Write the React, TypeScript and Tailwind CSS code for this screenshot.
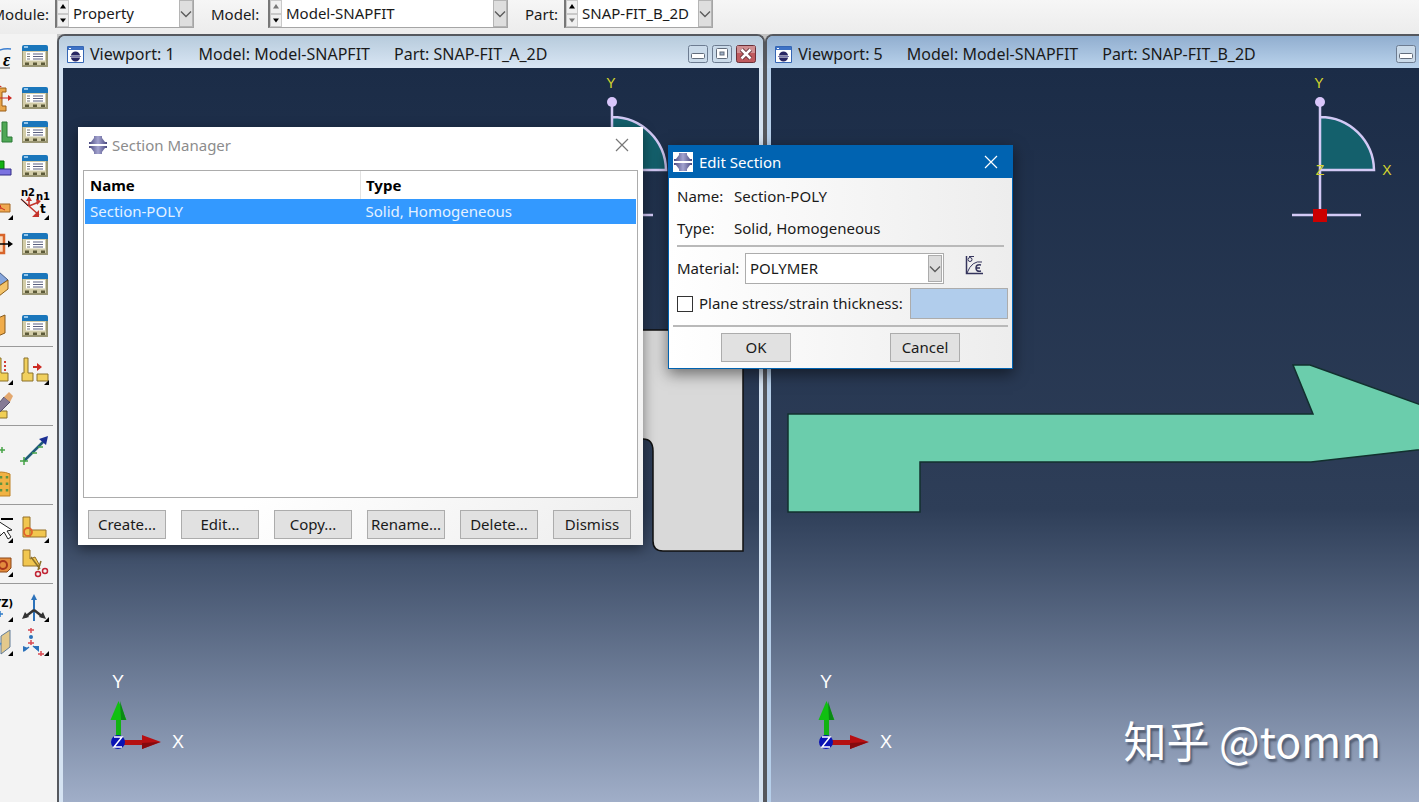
import React, { useState } from "react";

const UI_FONT = "font-['Noto_Sans','Open_Sans',sans-serif]";

function Chevron() {
  return (
    <svg viewBox="0 0 12 8" className="h-2 w-3" fill="none" stroke="#5c5c5c" strokeWidth="1.4">
      <path d="M1 1.500 6 6.500 11 1.500" />
    </svg>
  );
}

interface ComboProps {
  id: string;
  label: string;
  value: string;
  labelClass: string;
  boxClass: string;
  upOff?: boolean;
  downOff?: boolean;
}

function ContextCombo({ id, label, value, labelClass, boxClass, upOff, downOff }: ComboProps) {
  return (
    <div className="flex shrink-0 items-center gap-1.5">
      <label htmlFor={id} className={`flex whitespace-nowrap ${labelClass}`}>
        {label}
      </label>
      <div className={`flex h-7 border border-t-0 border-[#a5a5a5] border-l-2 border-l-[#777] bg-white ${boxClass}`}>
        <div className="flex w-3 shrink-0 flex-col">
          {[upOff, downOff].map((off, i) => (
            <button
              key={i}
              aria-label={i === 0 ? `Previous ${id}` : `Next ${id}`}
              className="flex flex-1 items-center justify-center border border-[#c9c9c9] bg-[#f0f0f0]"
            >
              <svg viewBox="0 0 8 5" className="h-[5px] w-2" fill={off ? "#777" : "#000"}>
                <path d={i === 0 ? "M4 0 7 4.500H1Z" : "M4 4.500 7 .5H1Z"} />
              </svg>
            </button>
          ))}
        </div>
        <div className="relative flex-1">
          <select id={id} className="h-full w-full appearance-none bg-transparent pl-1 outline-none">
            <option>{value}</option>
          </select>
          <span className="pointer-events-none absolute inset-y-0 right-0 flex w-3.5 items-center justify-center border border-[#b5b5b5] bg-[#dedede]">
            <Chevron />
          </span>
        </div>
      </div>
    </div>
  );
}

/* ---------- toolbox icons, all on a 28x28 grid ---------- */

function Flyout() {
  return <path d="M28 23v5h-5z" fill="#000" />;
}

function ManagerIcon() {
  return (
    <>
      <path d="M1 5h26v20H1z" fill="#9a9674" />
      <path d="M2 9h23v14H2z" fill="#d3cda9" />
      <path d="M1 5q0-2 2-2h22q2 0 2 2v4H1z" fill="#1a76bb" />
      <path d="M3 5h4" stroke="#bfe2fa" strokeWidth="1.500" />
      <path d="M5 10h19v8.500H5z" fill="#fff" />
      <path d="M6 12h3M6 14.500h3M6 17h3" stroke="#777" />
      <path d="M12 12h10M12 14.500h10M12 17h10" stroke="#5b6080" strokeWidth="1.200" />
      <path d="M4 20.500h4V23H4zM12 20.500h4V23h-4zM20 20.500h4V23h-4z" fill="#5c5a38" />
    </>
  );
}

const LEFT_ICONS: Record<string, React.ReactNode> = {
  material: (
    <>
      <path d="M0 24Q8 5 26 7" fill="none" stroke="#3c7fd0" strokeWidth="1.500" />
      <path d="M0 26h25" stroke="#555" />
      <text x="18" y="24" fontSize="18" fontWeight="bold" fontStyle="italic" fontFamily="Liberation Serif">ε</text>
      <path d="M12 1l3 3" stroke="#c33" />
    </>
  ),
  section: (
    <>
      <path d="M4 4h17v4h-4v14h4v5H4v-5h5V8H4z" fill="#e8a64a" stroke="#9a5c16" />
      <path d="M13 14h12M13 1v5" stroke="#cc2a22" />
      <path d="M23 11l4 3-4 3zM13 0l4 3h-4z" fill="#cc2a22" />
    </>
  ),
  assign: (
    <>
      <path d="M17 4h5v15h5v5H17z" fill="#4fa755" stroke="#2b7a36" />
      <path d="M8 13h7" stroke="#cc2a22" />
      <path d="M13 10l3 3-3 3z" fill="#cc2a22" />
    </>
  ),
  layup: (
    <>
      <path d="M5 9h14v8H5z" fill="#12b012" stroke="#067006" />
      <path d="M5 17h21v6H5z" fill="#7b72e0" stroke="#332d86" />
    </>
  ),
  beam: (
    <>
      <path d="M2 12h23v8H2z" fill="#f0a850" stroke="#a36722" />
      <path d="M15 13l1 3 4 2M16 16l-4 2" stroke="#cc2a22" fill="none" />
      <Flyout />
    </>
  ),
  stringer: (
    <>
      <path d="M8 5h11v18H8z" fill="#fbd8b8" stroke="#d8642a" strokeWidth="2.500" />
      <path d="M8 14h16" stroke="#000" strokeWidth="1.500" />
      <path d="M23 10.500l5 3.500-5 3.500z" />
    </>
  ),
  skin: (
    <>
      <path d="M4 10l10-8 9 8-9 6z" fill="#86a6dc" stroke="#405a88" />
      <path d="M14 16l9-6v9l-9 7z" fill="#f4c46a" stroke="#8a5d1c" />
    </>
  ),
  shell: <path d="M6 9l14-6v18L6 27z" fill="#f0ac4b" stroke="#875a1d" />,
  mirror: (
    <>
      <path d="M7 1h9v15h7v8H7z" fill="#f1cf55" stroke="#8a702a" />
      <path d="M20 4v12" stroke="#d33c35" strokeWidth="2" strokeDasharray="2 2" />
      <Flyout />
    </>
  ),
  erase: (
    <>
      <path d="M4 20h18v7H4z" fill="#f1cf55" stroke="#8a702a" />
      <path d="M10 17L19 6l6 5-11 11z" fill="#857a95" stroke="#56506a" />
      <path d="M19 6l5-5 4 4-3 6z" fill="#e3a86f" />
    </>
  ),
  point: <path d="M14 14h6M17 11v6" stroke="#47a447" strokeWidth="1.500" />,
  pattern: (
    <>
      <path d="M8 4q8-4 17 0v22H8z" fill="#f1b243" stroke="#bd8125" />
      <path d="M16 6v18M22 6v18" stroke="#5f9440" strokeWidth="2.500" strokeDasharray="2.500 4" />
    </>
  ),
  pick: (
    <>
      <path d="M16 4h12" stroke="#000" strokeWidth="2" />
      <path d="M13 6l2 15 4-4 4 7 3-2-4-6 5-1z" fill="#fff" stroke="#222" />
      <Flyout />
    </>
  ),
  cell: (
    <>
      <path d="M10 12l4-3h12v10l-4 4H10z" fill="#e38b3d" stroke="#8b4616" />
      <circle cx="18" cy="16" r="4" fill="none" stroke="#a8341b" strokeWidth="2" />
      <Flyout />
    </>
  ),
  xyz: (
    <>
      <text x="28" y="13" textAnchor="end" fontSize="10" fontWeight="bold" fontFamily="DejaVu Sans">YZ)</text>
      <path d="M12 20h6M15 17v6" stroke="#2e7bc8" strokeWidth="1.500" />
      <Flyout />
    </>
  ),
  datum: (
    <>
      <path d="M16 8l9-6v17l-9 7z" fill="#e3c98c" stroke="#627d98" />
      <path d="M12 20l4-5" stroke="#4a8ecc" strokeWidth="1.500" />
      <Flyout />
    </>
  ),
};

const RIGHT_ICONS: Record<string, React.ReactNode> = {
  manager: <ManagerIcon />,
  normals: (
    <>
      <g fontSize="10" fontWeight="bold" fontFamily="DejaVu Sans">
        <text x="0" y="4">n2</text>
        <text x="15" y="8">n1</text>
        <text x="19" y="21" fontSize="12">t</text>
      </g>
      <path d="M0 7l18 16M8 14V8M8 14l10-4" stroke="#c4342c" strokeWidth="1.500" fill="none" />
      <path d="M0 7l7 7" stroke="#333" />
      <path d="M18 18v7h-7zM5 9l3-5 3 5zM15 7l5 2-4 4z" fill="#c4342c" />
      <Flyout />
    </>
  ),
  offset: (
    <>
      <path d="M3 1h4v15h5v8H1v-8h2zM16 17h11v7H16z" fill="#f1d05e" stroke="#8a702a" />
      <path d="M12 10h5" stroke="#cc2a22" strokeWidth="2" />
      <path d="M16 6l5 4-5 4z" fill="#cc2a22" />
      <Flyout />
    </>
  ),
  axis: (
    <>
      <path d="M3 25L25 3" stroke="#1f5b78" strokeWidth="2.500" />
      <path d="M27 0l-2 9-7-6z" fill="#1b2f93" />
      <path d="M-1 25h8M3 21v8M11 17h5M17 11h5" stroke="#47a447" strokeWidth="1.500" />
    </>
  ),
  partition: (
    <>
      <path d="M2 2h7v13h16v7H2z" fill="#f1c64f" stroke="#94702a" />
      <path d="M9 15v7" stroke="#94702a" />
      <circle cx="7" cy="17" r="4" fill="none" stroke="#e0642b" strokeWidth="1.800" />
      <Flyout />
    </>
  ),
  trim: (
    <>
      <path d="M2 1h7v9l5-2 5 9H2z" fill="#f1c64f" stroke="#94702a" />
      <path d="M10 8l9 12M20 12l-3 9" stroke="#8a702a" strokeWidth="1.500" />
      <circle cx="17" cy="25" r="2.500" fill="none" stroke="#c12434" strokeWidth="1.500" />
      <circle cx="24" cy="22" r="2.500" fill="none" stroke="#c12434" strokeWidth="1.500" />
    </>
  ),
  csys: (
    <>
      <path d="M13 2v25" stroke="#2c72ba" strokeWidth="2" />
      <path d="M13 0l3 6h-6z" fill="#2c72ba" />
      <path d="M13 16L4 23M13 16l9 7" stroke="#333" strokeWidth="2.500" />
      <path d="M1 25l3-7 4 5zM25 25l-3-7-4 5z" fill="#333" />
      <Flyout />
    </>
  ),
  points: (
    <>
      <path d="M7 2h6M10 0v5M7 15h6M10 12v5M17 26h6M20 23v5" stroke="#d94a52" strokeWidth="1.500" />
      <circle cx="10" cy="9" r="2" fill="#2c72ba" />
      <path d="M2 24v-6l5 2zM12 18l6 6v-6z" fill="#2c72ba" />
      <path d="M3 23l5-4M12 18l5 4" stroke="#2c72ba" strokeWidth="1.500" />
      <Flyout />
    </>
  ),
};

interface ToolRow {
  left: string;
  right?: string;
  height: string;
}

const TOOL_GROUPS: ToolRow[][] = [
  [
    { left: "material", right: "manager", height: "h-11" },
    { left: "section", right: "manager", height: "h-10" },
    { left: "assign", right: "manager", height: "h-7" },
    { left: "layup", right: "manager", height: "h-10" },
    { left: "beam", right: "normals", height: "h-10" },
    { left: "stringer", right: "manager", height: "h-9" },
    { left: "skin", right: "manager", height: "h-11" },
    { left: "shell", right: "manager", height: "h-10" },
  ],
  [
    { left: "mirror", right: "offset", height: "h-12" },
    { left: "erase", height: "h-5" },
  ],
  [
    { left: "point", right: "axis", height: "h-12" },
    { left: "pattern", height: "h-5" },
  ],
  [
    { left: "pick", right: "partition", height: "h-12" },
    { left: "cell", right: "trim", height: "h-5" },
  ],
  [
    { left: "xyz", right: "csys", height: "h-12" },
    { left: "datum", right: "points", height: "h-5" },
  ],
];

function Toolbox() {
  return (
    <aside className="flex w-[57px] shrink-0 flex-col overflow-hidden bg-[#f3f3f3]">
      {TOOL_GROUPS.map((rows, g) => (
        <div key={g} className={`mr-1 flex flex-col pr-1 ${g > 0 ? "border-t border-[#9a9a9a] pb-2.5" : ""}`}>
          {rows.map((row) => (
            <div key={row.left} className={`flex items-center justify-end gap-2 ${row.height}`}>
              <button aria-label={row.left} className="size-7 shrink-0">
                <svg viewBox="0 0 28 28" className="size-7 overflow-visible">{LEFT_ICONS[row.left]}</svg>
              </button>
              {row.right ? (
                <button aria-label={row.right} className="size-7 shrink-0">
                  <svg viewBox="0 0 28 28" className="size-7 overflow-visible">{RIGHT_ICONS[row.right]}</svg>
                </button>
              ) : (
                <span className="size-7 shrink-0" />
              )}
            </div>
          ))}
        </div>
      ))}
    </aside>
  );
}

/* ---------- viewports ---------- */

function SketchGlyph() {
  return (
    <g>
      <path d="M549 48A54 54 0 0 1 603 102H549Z" fill="#14606c" />
      <path d="M549 34V147M549 49A54 54 0 0 1 603 102H549M521 147H590" fill="none" stroke="#d3c9f5" strokeWidth="2.500" />
      <circle cx="549" cy="34" r="5" fill="#d9c6fb" />
      <rect x="542" y="141" width="14" height="13" fill="#cc0000" />
      <g fill="#d6d62e" fontSize="14" textAnchor="middle" fontFamily="Liberation Sans">
        <text x="548" y="20">Y</text>
        <text x="616" y="107">X</text>
        <text x="549" y="107">Z</text>
      </g>
    </g>
  );
}

function Triad() {
  return (
    <svg viewBox="0 -10 90 100" className="absolute bottom-[38px] left-10 h-[100px] w-[90px]">
      <path d="M13 66V42h5v24z" fill="#12b312" />
      <path d="M15.500 27l8 19h-16z" fill="#10c010" />
      <path d="M17 27l6 19h-5z" fill="#0a8a14" />
      <path d="M18 66h22v5H18z" fill="#b51212" />
      <path d="M39 61l19 7-19 7z" fill="#b80f12" />
      <path d="M39 69l18-1-18 7z" fill="#850a0e" />
      <circle cx="15" cy="68" r="7" fill="#0a12b4" />
      <path d="M11 63h8l-8 10h8" fill="none" stroke="#fff" strokeWidth="1.500" />
      <g fill="#fff" fontSize="18" textAnchor="middle" fontFamily="Liberation Sans">
        <text x="15" y="14">Y</text>
        <text x="75" y="74">X</text>
      </g>
    </svg>
  );
}

interface ViewportProps {
  id: number;
  part: string;
  active?: boolean;
  children: React.ReactNode;
}

function Viewport({ id, part, active, children }: ViewportProps) {
  return (
    <section
      className={`flex w-[52%] shrink-0 flex-col rounded-t-lg border-t-2 border-r-2 border-l-2 border-[#55585e] ${
        active ? "bg-[#b6cfea]" : "bg-[#d5e3f2]"
      }`}
    >
      <header
        className={`flex h-8 shrink-0 items-center gap-6 rounded-t-md bg-linear-to-b pt-1 pr-[7px] pl-2 text-base whitespace-nowrap ${
          active ? "from-[#91aecf] to-[#bad3ec]" : "from-[#b7cbdc] to-[#d9e6f4]"
        }`}
      >
        <span className="flex items-center gap-1.5">
          <svg viewBox="0 0 17 17" className="size-[17px]">
            <path d="M.5.500h16v16H.5z" fill="#fff" stroke="#3566b4" />
            <path d="M1 1h15v3H1z" fill="#3e72c5" />
            <path d="M2 2.500h2" stroke="#fff" />
            <path d="M4 9.500a4.500 4 0 0 1 9 0zM4 11.500a4.500 4 0 0 0 9 0z" fill="#292663" />
            <path d="M3 10.500h11" stroke="#7675a8" />
          </svg>
          <span>Viewport: {id}</span>
        </span>
        <span>Model: Model-SNAPFIT</span>
        <span>Part: {part}</span>
        <span className="ml-auto flex gap-1">
          <button aria-label="Minimize" className="h-[18px] w-5">
            <svg viewBox="0 0 20 18" className="h-[18px] w-5">
              <rect x=".5" y=".5" width="19" height="17" rx="2" fill="#cbdbea" stroke="#6d7c91" />
              <rect x="3.500" y="8.500" width="13" height="5" rx="1" fill="#fff" stroke="#626d7c" />
            </svg>
          </button>
          <button aria-label="Maximize" className="h-[18px] w-5">
            <svg viewBox="0 0 20 18" className="h-[18px] w-5">
              <rect x=".5" y=".5" width="19" height="17" rx="2" fill="#cbdbea" stroke="#6d7c91" />
              <rect x="4.500" y="3.500" width="11" height="10" rx="1" fill="#fff" stroke="#626d7c" />
              <rect x="8" y="7" width="4" height="3" fill="#9fb0c5" stroke="#626d7c" />
            </svg>
          </button>
          <button aria-label="Close" className="h-[18px] w-5">
            <svg viewBox="0 0 20 18" className="h-[18px] w-5">
              <rect x=".5" y=".5" width="19" height="17" rx="2" fill="#bf5a5e" stroke="#6a3038" />
              <path d="M1 1h18v7H1z" fill="#d08f92" />
              <path d="M5.500 4.500l9 9M14.500 4.500l-9 9" stroke="#663339" strokeWidth="4.500" />
              <path d="M5.500 4.500l9 9M14.500 4.500l-9 9" stroke="#fff" strokeWidth="2.500" />
            </svg>
          </button>
        </span>
      </header>
      <div className="relative mx-1 min-h-0 flex-1 overflow-hidden bg-linear-to-b from-[#1b2c47] via-[#2e3e58] via-60% to-[#a0aec8]">
        <svg className="absolute top-0 left-0 h-full w-full">
          <SketchGlyph />
          {children}
        </svg>
        <Triad />
      </div>
    </section>
  );
}

/* ---------- dialogs ---------- */

function AppMark({ boxed }: { boxed?: boolean }) {
  return (
    <svg viewBox="0 0 20 20" className="size-5">
      <defs>
        <linearGradient id="mark">
          <stop offset="0" stopColor="#4b4a80" />
          <stop offset=".5" stopColor="#a3a3cf" />
          <stop offset="1" stopColor="#4b4a80" />
        </linearGradient>
      </defs>
      {boxed && <path d="M0 0h20v20H0z" fill="#fff" />}
      <path d="M6 1h8v2l3 4h2v2H1V7h2l3-4z" fill="url(#mark)" />
      <path d="M6 19h8v-2l3-4h2v-2H1v2h2l3 4z" fill="url(#mark)" />
    </svg>
  );
}

function CloseCross() {
  return (
    <svg viewBox="0 0 14 14" className="size-3.5" fill="none" stroke="currentColor" strokeWidth="1.200">
      <path d="M1 1l12 12M13 1L1 13" />
    </svg>
  );
}

const SECTIONS = [{ name: "Section-POLY", type: "Solid, Homogeneous" }];

const MANAGER_ACTIONS = ["Create...", "Edit...", "Copy...", "Rename...", "Delete...", "Dismiss"];

function SectionManager() {
  const [selected, setSelected] = useState(SECTIONS[0].name);

  return (
    <div
      role="dialog"
      aria-label="Section Manager"
      className="absolute top-[127px] left-[78px] flex h-[418px] w-[565px] flex-col bg-linear-to-br from-white from-60% to-[#ededed] shadow-[0_4px_12px_rgba(0,0,0,0.45)]"
    >
      <header className="flex h-9 shrink-0 items-center gap-1 pr-3.5 pl-2.5 text-[#8c8c8c]">
        <AppMark />
        <span>Section Manager</span>
        <button aria-label="Close Section Manager" className="ml-auto text-[#777]">
          <CloseCross />
        </button>
      </header>
      <div className="mx-[5px] mt-[7px] flex-1 border border-[#acacac] bg-white px-px">
        <table className="w-full table-fixed border-collapse text-left">
          <thead>
            <tr className="h-7">
              <th className="w-1/2 border-r border-[#e2e2e2] px-[5px] py-0 font-bold text-black">Name</th>
              <th className="px-[5px] py-0 font-bold text-black">Type</th>
            </tr>
          </thead>
          <tbody>
            {SECTIONS.map((s) => (
              <tr
                key={s.name}
                onClick={() => setSelected(s.name)}
                className={`h-[25px] ${selected === s.name ? "bg-[#3399ff] text-[#e4f2ff]" : ""}`}
              >
                <td className="px-[5px] py-0">{s.name}</td>
                <td className="px-[5px] py-0">{s.type}</td>
              </tr>
            ))}
          </tbody>
        </table>
      </div>
      <div className="mt-3 mr-3 mb-1.5 ml-2.5 flex shrink-0 justify-between">
        {MANAGER_ACTIONS.map((a) => (
          <button key={a} className="h-[29px] w-[78px] border border-[#acacac] bg-[#e1e1e1] whitespace-nowrap">
            {a}
          </button>
        ))}
      </div>
    </div>
  );
}

function EditSection() {
  const [plane, setPlane] = useState(false);

  return (
    <div
      role="dialog"
      aria-label="Edit Section"
      className="absolute top-[145px] left-[668px] flex w-[345px] flex-col border border-[#0063b1] bg-linear-to-r from-white to-[#ededed] shadow-[0_5px_14px_rgba(0,0,0,0.5)]"
    >
      <header className="flex h-8 shrink-0 items-center gap-1.5 bg-[#0063b1] pr-3.5 pl-1 text-white">
        <AppMark boxed />
        <span>Edit Section</span>
        <button aria-label="Close Edit Section" className="ml-auto">
          <CloseCross />
        </button>
      </header>
      <dl className="mx-2 grid grid-cols-[57px_1fr] border-b-2 border-[#b9b9b9] pt-0.5 pb-px leading-8">
        <dt>Name:</dt>
        <dd>Section-POLY</dd>
        <dt>Type:</dt>
        <dd>Solid, Homogeneous</dd>
      </dl>
      <div className="flex flex-col gap-1 px-2 pt-1.5">
        <div className="flex h-[31px] items-center">
          <label htmlFor="material" className="w-[68px]">Material:</label>
          <div className="relative h-full w-[199px] border border-[#acacac] bg-white">
            <select id="material" className="h-full w-full appearance-none bg-transparent pl-1 outline-none">
              <option>POLYMER</option>
            </select>
            <span className="pointer-events-none absolute inset-y-px right-px flex w-3.5 items-center justify-center border border-[#acacac] bg-[#dcdcdc]">
              <Chevron />
            </span>
          </div>
          <button aria-label="Create material" className="mb-2 ml-5">
            <svg viewBox="0 0 20 20" className="size-5" fill="none" stroke="#34345c">
              <path d="M2.500 1v17.500H19" strokeWidth="1.500" />
              <path d="M3 18Q8 5 18 7" />
              <circle cx="6" cy="4.500" r="2" />
              <path d="M5 1.500h5" />
              <path d="M17 10q-5-1-5 3t5 3M12 13h4" strokeWidth="1.500" />
            </svg>
          </button>
        </div>
        <div className="flex h-[31px] items-center justify-between">
          <label className="flex items-center gap-1.5 whitespace-nowrap">
            <input
              type="checkbox"
              checked={plane}
              onChange={(e) => setPlane(e.target.checked)}
              className="size-4 appearance-none border border-[#333] bg-white checked:bg-[#3399ff]"
            />
            Plane stress/strain thickness:
          </label>
          <input
            aria-label="Thickness"
            disabled={!plane}
            className="-mr-1 h-full w-[98px] shrink-0 border border-[#acacac] bg-[#b1cdec] px-1"
          />
        </div>
      </div>
      <div className="mx-1 mt-1.5 flex justify-between border-t-2 border-[#b9b9b9] px-12 pt-1.5 pb-1.5">
        <button className="h-[29px] w-[70px] border border-[#acacac] bg-[#e1e1e1]">OK</button>
        <button className="h-[29px] w-[70px] border border-[#acacac] bg-[#e1e1e1]">Cancel</button>
      </div>
    </div>
  );
}

export default function App() {
  return (
    <div className={`relative flex h-screen flex-col overflow-hidden bg-[#f3f3f3] text-[15px] text-[#1a1a1a] ${UI_FONT}`}>
      <div className="flex h-[34px] shrink-0 items-start gap-[17px] bg-linear-to-b from-[#f6f6f6] to-[#ececec]">
        <ContextCombo id="module" label="Module:" value="Property" labelClass="w-[49px] justify-end" boxClass="w-[139px]" />
        <ContextCombo id="model" label="Model:" value="Model-SNAPFIT" labelClass="w-[51px]" boxClass="w-[240px]" upOff />
        <ContextCombo id="part" label="Part:" value="SNAP-FIT_B_2D" labelClass="w-[33px]" boxClass="w-[149px]" downOff />
      </div>

      <div className="flex min-h-0 flex-1">
        <Toolbox />
        <main className="flex min-w-0 flex-1 overflow-hidden bg-[#c4c4c4]">
          <Viewport id={1} part="SNAP-FIT_A_2D">
            <path
              d="M500 262H680V483H600Q590 483 590 473V383Q590 371 580 371H500Z"
              fill="#d9d9d9"
              stroke="#111"
              strokeWidth="1.500"
            />
          </Viewport>
          <Viewport id={5} part="SNAP-FIT_B_2D" active>
            <path
              d="M17 346H542L522 297H539L700 355V376L540 394H149V444H17Z"
              fill="#6bcdac"
              stroke="#12302e"
              strokeWidth="1.500"
            />
          </Viewport>
        </main>
      </div>

      <SectionManager />
      <EditSection />

      <div className="absolute right-[38px] bottom-[33px] font-['Noto_Sans_CJK_SC',sans-serif] text-[43px] leading-[60px] text-white [text-shadow:2px_3px_2px_rgba(60,70,90,0.7)]">
        知乎 @tomm
      </div>
    </div>
  );
}
